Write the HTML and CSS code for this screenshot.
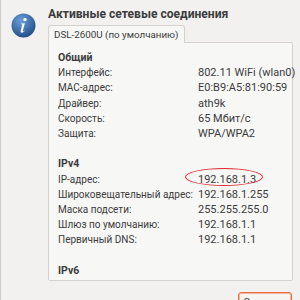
FILE: index.html
```html
<!DOCTYPE html>
<html lang="ru">
<head>
    <meta charset="UTF-8">
    <meta name="viewport" content="width=device-width, initial-scale=1.0">
    <title>Активные сетевые соединения</title>
    <link rel="stylesheet" href="styles.css">
</head>
<body>

    <div class="dialog">

        <div class="icon">
            <svg width="25" height="25" viewBox="0 0 25 25">
                <defs>
                    <radialGradient id="blue" cx="0.4" cy="0.3" r="0.75">
                        <stop offset="0" stop-color="#6c9fd6"/>
                        <stop offset="1" stop-color="#204a87"/>
                    </radialGradient>
                </defs>
                <circle cx="12.5" cy="12.5" r="12" fill="url(#blue)"/>
                <circle cx="14" cy="6.6" r="1.7" fill="#fff"/>
                <path d="M10.2 10.6 L13.9 10.2 L11.9 17.6 Q11.6 18.8 12.6 18.2 L13.6 17.4 L13.9 17.8 Q12.2 19.8 10.6 19.8 Q9.2 19.7 9.7 17.8 L11.2 12 Q11.3 11.3 10.3 11.2 Z" fill="#fff"/>
            </svg>
        </div>

        <div class="main">
            <h1 class="title">Активные сетевые соединения</h1>

            <div class="tabs">
                <div class="tab">DSL-2600U (по умолчанию)</div>
            </div>

            <div class="panel">
                <div class="section">Общий</div>
                <div class="rows">
                    <span class="key">Интерфейс:</span><span>802.11 WiFi (wlan0)</span>
                    <span class="key">MAC-адрес:</span><span>E0:B9:A5:81:90:59</span>
                    <span class="key">Драйвер:</span><span>ath9k</span>
                    <span class="key">Скорость:</span><span>65 Мбит/с</span>
                    <span class="key">Защита:</span><span>WPA/WPA2</span>
                </div>

                <div class="section gap">IPv4</div>
                <div class="rows">
                    <span class="key">IP-адрес:</span><span class="marked">192.168.1.3</span>
                    <span class="key">Широковещательный адрес:</span><span>192.168.1.255</span>
                    <span class="key">Маска подсети:</span><span>255.255.255.0</span>
                    <span class="key">Шлюз по умолчанию:</span><span>192.168.1.1</span>
                    <span class="key">Первичный DNS:</span><span>192.168.1.1</span>
                </div>

                <div class="section gap">IPv6</div>
            </div>

            <div class="buttons">
                <button class="close">Закрыть</button>
            </div>
        </div>

    </div>

</body>
</html>
```

FILE: styles.css
```css
html {
    overflow: hidden;
}

body {
    margin: 0;
    width: 300px;
    height: 300px;
    overflow: hidden;
    background-color: #f2f1f0;
    border-left: 1px solid #cfcdca;
    box-sizing: border-box;
    font-family: Roboto, "Noto Sans", sans-serif;
    font-size: 11px;
    color: #3c3c3c;
}

.dialog {
    display: flex;
}

.icon {
    width: 47px;
    padding-left: 10px;
    padding-top: 13px;
    box-sizing: border-box;
}

.main {
    width: 245px;
}

.title {
    margin: 0;
    padding-top: 5px;
    height: 20px;
    font-size: 12.1px;
    line-height: 18px;
    font-weight: bold;
    color: #3c3c3c;
}

.tabs {
    display: flex;
}

.tab {
    height: 18px;
    line-height: 18px;
    padding: 0 5px;
    font-size: 9.8px;
    border: 1px solid #d4d2cf;
    border-bottom: none;
    border-radius: 3px 3px 0 0;
    background-color: #f7f7f6;
    box-sizing: border-box;
    margin-bottom: -1px;
    position: relative;
}

.panel {
    height: 239px;
    padding: 7px 9px 0;
    border: 1px solid #d4d2cf;
    border-radius: 0 2px 2px 2px;
    background-color: #f7f7f6;
    box-sizing: border-box;
    line-height: 15.2px;
}

.section {
    font-weight: bold;
    font-size: 10.5px;
}

.section.gap {
    margin-top: 15.2px;
}

.rows {
    display: grid;
    grid-template-columns: 140px 1fr;
}

.rows span {
    white-space: nowrap;
}

.rows .key {
    font-size: 10px;
}

.marked {
    position: relative;
}

.marked::after {
    content: "";
    position: absolute;
    left: -13px;
    top: -4px;
    width: 76px;
    height: 16px;
    border: 1.5px solid #e0262a;
    border-radius: 50%;
}

.buttons {
    display: flex;
    justify-content: flex-end;
    padding-top: 11px;
    padding-right: 1px;
    height: 8px;
}

.close {
    width: 54px;
    height: 20px;
    flex-shrink: 0;
    font-family: inherit;
    font-size: 10.5px;
    color: #3c3c3c;
    background-color: #f5f4f3;
    border: 1px solid #e86d45;
    border-radius: 3px;
    box-shadow: inset 0 0 0 1px #f4b49c;
    padding: 0;
}
```
